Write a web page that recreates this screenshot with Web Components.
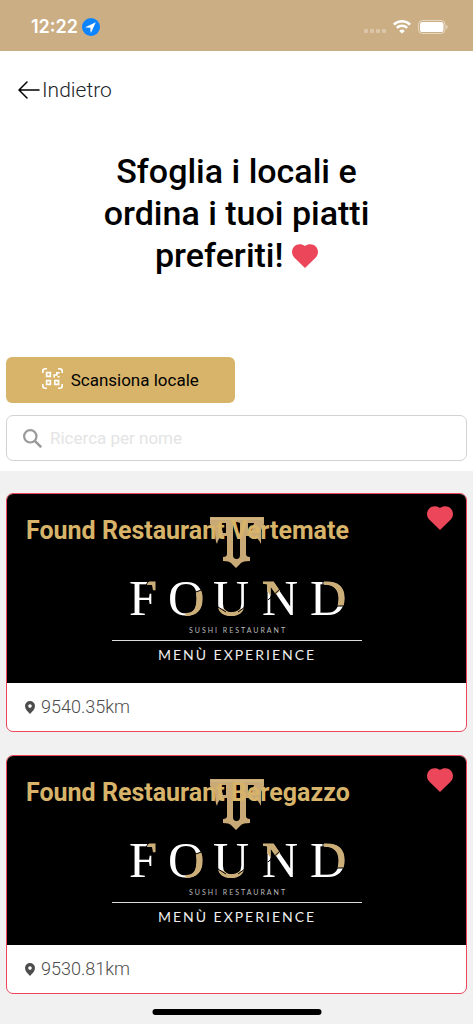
<!DOCTYPE html>
<html lang="it">
<head>
<meta charset="utf-8">
<meta name="viewport" content="width=device-width, initial-scale=1">
<title>Locali</title>
<style>
  body {
    margin: 0;
    background: #f1f1f1;
    font-family: Roboto, "Open Sans", sans-serif;
    color: #212529;
    --gold: #d7b46a;
    --sand: #ccae84;
    --red: #ec465a;
  }
</style>
</head>
<body>
<venue-app></venue-app>

<script>
class StatusBar extends HTMLElement {
  constructor() {
    super();
    this.attachShadow({ mode: 'open' }).innerHTML = `
      <style>
        :host {
          display: flex;
          align-items: center;
          justify-content: space-between;
          height: 51px;
          padding: 2px 25px 0 31px;
          box-sizing: border-box;
          background: var(--sand);
          color: #fff;
          font: 600 18px Inter, sans-serif;
        }
        div { display: flex; align-items: center; }
        .time { gap: 4px; }
        .signal { gap: 7px; }
        svg { display: block; }
      </style>
      <div class="time">
        <span><slot></slot></span>
        <svg width="18" height="18" viewBox="0 0 18 18">
          <circle cx="9" cy="9" r="9" fill="#0a84ff"/>
          <path d="M13.8 4.3 3.8 8.9q-.6.5.1.7l4.5.1.1 4.5q.2.7.7.1z" fill="#fff"/>
        </svg>
      </div>
      <div class="signal">
        <svg width="22" height="14" viewBox="0 0 22 14" fill="#fff" fill-opacity=".3">
          <rect x="0" y="9" width="4" height="4" rx="1"/>
          <rect x="6" y="9" width="4" height="4" rx="1"/>
          <rect x="12" y="9" width="4" height="4" rx="1"/>
          <rect x="18" y="9" width="4" height="4" rx="1"/>
        </svg>
        <svg width="18" height="14" viewBox="0 0 18 14" fill="none" stroke="#fff" stroke-width="2.5">
          <path d="M.9 4.6a11.7 11.7 0 0 1 16.2 0M3.800 7.900a7.600 7.600 0 0 1 10.400 0"/>
          <path d="M9 13.600 6.200 10.900a4 4 0 0 1 5.600 0z" fill="#fff" stroke="none"/>
        </svg>
        <svg width="30" height="14" viewBox="0 0 30 14">
          <rect x=".5" y=".5" width="26.5" height="13" rx="4" fill="none" stroke="#fff" stroke-opacity=".5"/>
          <rect x="2" y="2" width="23.5" height="10" rx="2.6" fill="#fff"/>
          <path d="M28.2 5v4q1.4-.6 1.4-2t-1.4-2z" fill="#fff" fill-opacity=".6"/>
        </svg>
      </div>
    `;
  }
}
customElements.define('status-bar', StatusBar);

class HeartIcon extends HTMLElement {
  constructor() {
    super();
    this.attachShadow({ mode: 'open' }).innerHTML = `
      <style>
        :host { display: inline-block; width: 26px; height: 24px; }
        svg { display: block; width: 100%; height: 100%; }
      </style>
      <svg viewBox="0 0 26 24" fill="var(--red)">
        <path d="M13 24 2.2 13.4C-.7 10.5-.7 5.4 2.2 2.5 5-.4 9.6-.6 13 2c3.4-2.6 8-2.4 10.8.5 2.9 2.9 2.9 8 0 10.900z"/>
      </svg>
    `;
  }
}
customElements.define('heart-icon', HeartIcon);

class BackLink extends HTMLElement {
  constructor() {
    super();
    this.attachShadow({ mode: 'open' }).innerHTML = `
      <style>
        :host { display: flex; }
        a {
          display: flex;
          align-items: center;
          gap: 2px;
          color: inherit;
          text-decoration: none;
          font-size: 21px;
          line-height: 24px;
          font-weight: 300;
        }
      </style>
      <a href="#">
        <svg width="22" height="18" viewBox="0 0 22 18" fill="none" stroke="#000" stroke-width="1.5" stroke-linecap="round" stroke-linejoin="round">
          <path d="M21 9H1M9 1 1 9l8 8"/>
        </svg>
        <slot></slot>
      </a>
    `;
  }
}
customElements.define('back-link', BackLink);

class ScanButton extends HTMLElement {
  constructor() {
    super();
    this.attachShadow({ mode: 'open' }).innerHTML = `
      <style>
        :host { display: block; }
        button {
          display: flex;
          align-items: center;
          justify-content: center;
          gap: 8px;
          width: 100%;
          height: 46px;
          border: 0;
          border-radius: 6px;
          background: var(--gold);
          color: #000;
          font: inherit;
          font-size: 17px;
        }
        svg { margin-bottom: 4px; }
      </style>
      <button type="button">
        <svg width="21" height="21" viewBox="0 0 21 21" fill="none" stroke="#fff" stroke-width="1.6">
          <path d="M.8 5V3.3Q.8.8 3.3.8H5M16 .8h1.7q2.5 0 2.5 2.5V5M20.2 16v1.7q0 2.5-2.5 2.500H16M5 20.200H3.300Q.8 20.200.8 17.700V16"/>
          <path d="M4.600 4.600h3.800v3.800H4.600zM4.600 12.600h3.800v3.800H4.600zM12.800 12.600h3.800v3.800h-3.800z"/>
          <path d="M12.200 9.500V7h2.600V4.800h3M15.600 8.800h2"/>
        </svg>
        <slot></slot>
      </button>
    `;
  }
}
customElements.define('scan-button', ScanButton);

class SearchField extends HTMLElement {
  constructor() {
    super();
    this.attachShadow({ mode: 'open' }).innerHTML = `
      <style>
        :host {
          display: flex;
          align-items: center;
          gap: 8px;
          height: 46px;
          padding: 0 16px;
          box-sizing: border-box;
          border: 1px solid #d2d2d2;
          border-radius: 7px;
          background: #fff;
        }
        label { display: flex; }
        input {
          flex: 1;
          min-width: 0;
          padding: 0;
          border: 0;
          outline: 0;
          background: none;
          font: inherit;
          font-size: 17px;
        }
        input::placeholder { color: #e4e4e4; opacity: 1; }
      </style>
      <label for="search" aria-label="Ricerca per nome">
        <svg width="19" height="19" viewBox="0 0 19 19" fill="none" stroke="#999" stroke-width="2.2">
          <circle cx="7.3" cy="7.3" r="6.2"/>
          <path d="m11.8 11.8 6.4 6.4" stroke-width="2.6"/>
        </svg>
      </label>
      <input id="search" type="text" placeholder="Ricerca per nome">
    `;
  }
}
customElements.define('search-field', SearchField);

class FoundLogo extends HTMLElement {
  constructor() {
    super();
    this.attachShadow({ mode: 'open' }).innerHTML = `
      <style>
        :host { display: block; }
        svg { display: block; }
        .name { font: 50px "Liberation Serif", serif; }
        .small { font: 7px Lato, sans-serif; letter-spacing: 2px; }
        .menu { font: 14px Lato, sans-serif; letter-spacing: 2px; }
      </style>
      <svg width="250" height="146" viewBox="0 0 250 146" text-anchor="middle" fill="#fff">
        <defs>
          <clipPath id="accents">
            <path d="M33 71l6-8h10v14H38zM75 78l18-5v30H73zM106 92l6 1q8 5 16 0l6-1v11h-28zM148 62h14l7 12-9 8-4-6h-8zM212 62h26v28h-26z"/>
          </clipPath>
        </defs>
        <g fill="#c9a975">
          <path d="M98 1h54v7l-3 6v14q-3-7-9-8h-6v18q0 3 4 3v4q-7 0-9 2l-5 5-5-5q-2-2-8-2v-4q4 0 4-3V20h-3q-6 1-7 8-2-3-2-14l-5-6z"/>
        </g>
        <path d="M121 7q3-2 7 0v32q0 4-3.500 4T121 39zM108 7h6v10h-3zM142 7h-6v10h3z" fill="#000"/>
        <path d="M99 3h52" fill="none" stroke="#d9bd8a"/>
        <g class="name">
          <g id="letters">
            <text x="31" y="99">F</text>
            <text x="74" y="99">O</text>
            <text x="119" y="99">U</text>
            <text x="168" y="99">N</text>
            <text x="216" y="99">D</text>
          </g>
          <use href="#letters" fill="#ccae78" stroke="#ccae78" stroke-width="1" clip-path="url(#accents)"/>
        </g>
        <path d="M32 72l6-9M81 77l11-4M106 91l8 5M126 96l7-5M156 84l12-11M223 90h12M211 64v5" stroke="#000"/>
        <text class="small" x="126" y="117" fill="#bbb">SUSHI RESTAURANT</text>
        <path d="M0 124h250v1H0z" fill="#ddd"/>
        <text class="menu" x="125" y="144" fill="#eee">MENÙ EXPERIENCE</text>
      </svg>
    `;
  }
}
customElements.define('found-logo', FoundLogo);

class VenueCard extends HTMLElement {
  constructor() {
    super();
    this.attachShadow({ mode: 'open' });
  }

  set venue(venue) {
    this._venue = venue;
    this.render();
  }

  render() {
    this.shadowRoot.innerHTML = `
      <style>
        :host {
          display: block;
          overflow: hidden;
          border: 1px solid var(--red);
          border-radius: 7px;
          background: #fff;
        }
        .cover {
          position: relative;
          display: flex;
          justify-content: center;
          padding: 22px 0 21px;
          background: #000;
        }
        h2 {
          position: absolute;
          top: 21px;
          left: 19px;
          margin: 0;
          color: var(--gold);
          font-size: 25px;
          line-height: 32px;
          font-weight: 700;
        }
        heart-icon { position: absolute; top: 12px; right: 13px; }
        p {
          display: flex;
          align-items: center;
          gap: 6px;
          margin: 0;
          padding: 12px 18px;
          color: #4d4d4d;
          font-size: 18px;
          line-height: 24px;
          font-weight: 300;
        }
      </style>
      <div class="cover">
        <found-logo></found-logo>
        <h2>${this._venue.name}</h2>
        <heart-icon></heart-icon>
      </div>
      <p>
        <svg width="10" height="13" viewBox="0 0 10 13" fill="#4d4d4d">
          <path fill-rule="evenodd" d="M5 0a5 5 0 0 1 5 5c0 3-2.5 5.5-5 8-2.5-2.5-5-5-5-8a5 5 0 0 1 5-5zm0 3.3a1.8 1.8 0 1 0 0 3.6 1.8 1.8 0 0 0 0-3.600z"/>
        </svg>
        ${this._venue.distance}
      </p>
    `;
  }
}
customElements.define('venue-card', VenueCard);

class VenueList extends HTMLElement {
  constructor() {
    super();
    this.attachShadow({ mode: 'open' });
  }

  set venues(venues) {
    this._venues = venues;
    this.render();
  }

  render() {
    this.shadowRoot.innerHTML = `
      <style>
        :host { display: grid; gap: 23px; padding: 22px 6px 30px; }
      </style>
    `;
    this._venues.forEach((venue) => {
      const card = document.createElement('venue-card');
      card.venue = venue;
      this.shadowRoot.appendChild(card);
    });
  }
}
customElements.define('venue-list', VenueList);

class VenueApp extends HTMLElement {
  constructor() {
    super();
    this.attachShadow({ mode: 'open' }).innerHTML = `
      <style>
        :host { display: block; }
        header { padding: 27px 6px 10px; background: #fff; }
        back-link { padding: 0 12px; }
        h1 {
          max-width: 300px;
          margin: 48px auto 81px;
          color: #000;
          font-size: 34px;
          line-height: 42px;
          font-weight: 500;
          text-align: center;
        }
        h1 heart-icon { vertical-align: -1px; }
        .tools { display: grid; grid-template-columns: 1fr 1fr; gap: 12px 4px; }
        search-field { grid-column: 1 / -1; }
        .home {
          position: fixed;
          bottom: 9px;
          left: 50%;
          width: 169px;
          height: 6px;
          border-radius: 3px;
          background: #000;
          transform: translateX(-50%);
        }
      </style>
      <status-bar>12:22</status-bar>
      <header>
        <back-link>Indietro</back-link>
        <h1>Sfoglia i locali e ordina i tuoi piatti preferiti! <heart-icon></heart-icon></h1>
        <div class="tools">
          <scan-button>Scansiona locale</scan-button>
          <search-field></search-field>
        </div>
      </header>
      <main><venue-list></venue-list></main>
      <div class="home"></div>
    `;
    this.shadowRoot.querySelector('venue-list').venues = [
      { name: 'Found Restaurant Vertemate', distance: '9540.35km' },
      { name: 'Found Restaurant Beregazzo', distance: '9530.81km' },
    ];
  }
}
customElements.define('venue-app', VenueApp);
</script>
</body>
</html>
